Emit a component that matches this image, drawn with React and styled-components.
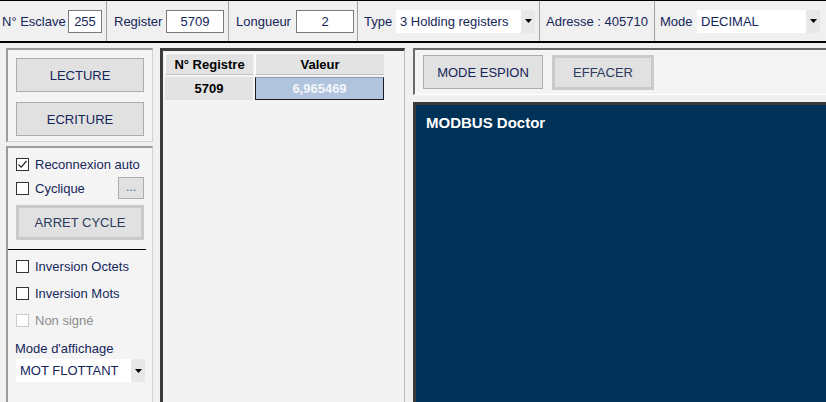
import React from "react";
import styled, { createGlobalStyle } from "styled-components";

const GlobalStyle = createGlobalStyle`
  html, body {
    margin: 0;
    padding: 0;
    background: #f0f0f0;
    font-family: "Liberation Sans", Arial, sans-serif;
  }
`;

function Checkbox({ checked, disabled, label }) {
  return (
    <CheckRow disabled={disabled}>
      <Box disabled={disabled}>
        {checked && (
          <svg width="11" height="11" viewBox="0 0 11 11">
            <path d="M1.5 5.5 L4.2 8.2 L9.5 2" fill="none" stroke="#222" strokeWidth="1.2" />
          </svg>
        )}
      </Box>
      <span>{label}</span>
    </CheckRow>
  );
}

function Select({ value, width }) {
  return (
    <SelectBox width={width}>
      <span>{value}</span>
      <Arrow>
        <svg width="7" height="4" viewBox="0 0 7 4">
          <path d="M0 0 H7 L3.5 4 Z" fill="#000" />
        </svg>
      </Arrow>
    </SelectBox>
  );
}

function App() {
  return (
    <Page>
      <GlobalStyle />
      <TopBar>
        <Field width={107} pl={2} pr={4}>
          <Label>N° Esclave</Label>
          <Input width={34}>255</Input>
        </Field>
        <Field width={122} pl={7} pr={4}>
          <Label>Register</Label>
          <Input width={58}>5709</Input>
        </Field>
        <Field width={129} pl={7} pr={3}>
          <Label>Longueur</Label>
          <Input width={58}>2</Input>
        </Field>
        <Field width={182} pl={6} pr={4}>
          <Label>Type</Label>
          <Select value="3 Holding registers" width={139} />
        </Field>
        <Field width={115} pl={6} pr={4}>
          <Label>Adresse : 405710</Label>
        </Field>
        <Field width={171} pl={5} pr={6} last>
          <Label>Mode</Label>
          <Select value="DECIMAL" width={123} />
        </Field>
      </TopBar>

      <Main>
        <LeftColumn>
          <Group>
            <Button>LECTURE</Button>
            <Button>ECRITURE</Button>
          </Group>
          <Group grow>
            <Options>
              <Checkbox checked label="Reconnexion auto" />
              <CycleRow>
                <Checkbox label="Cyclique" />
                <SmallButton>...</SmallButton>
              </CycleRow>
              <Button thick>ARRET CYCLE</Button>
            </Options>
            <Rule />
            <Options tight>
              <Checkbox label="Inversion Octets" />
              <Checkbox label="Inversion Mots" />
              <Checkbox disabled label="Non signé" />
            </Options>
            <DisplayLabel>Mode d'affichage</DisplayLabel>
            <Select value="MOT FLOTTANT" width={129} />
          </Group>
        </LeftColumn>

        <GridPanel>
          <Table>
            <HeadCell>N° Registre</HeadCell>
            <HeadCell>Valeur</HeadCell>
            <Cell>5709</Cell>
            <Cell selected>6,965469</Cell>
          </Table>
        </GridPanel>

        <RightColumn>
          <Toolbar>
            <Button wide={120}>MODE ESPION</Button>
            <Button wide={102} thick>EFFACER</Button>
          </Toolbar>
          <Console>
            <ConsoleTitle>MODBUS Doctor</ConsoleTitle>
          </Console>
        </RightColumn>
      </Main>
    </Page>
  );
}

export default App;

const Page = styled.div`
  width: 826px;
  height: 402px;
  display: flex;
  flex-direction: column;
  overflow: hidden;
  color: #14265a;
`;

const TopBar = styled.div`
  height: 40px;
  display: flex;
  border-top: 1px solid #000;
  border-bottom: 2px solid #000;
  box-sizing: content-box;
  font-size: 13px;
`;

const Field = styled.div`
  width: ${(p) => p.width}px;
  box-sizing: border-box;
  padding: 0 ${(p) => p.pr}px 0 ${(p) => p.pl}px;
  display: flex;
  align-items: center;
  justify-content: space-between;
  border-right: ${(p) => (p.last ? "none" : "1px solid #a0a0a0")};
`;

const Label = styled.span`
  white-space: nowrap;
`;

const Input = styled.div`
  width: ${(p) => p.width}px;
  height: 23px;
  box-sizing: border-box;
  border: 1px solid #7a7a7a;
  background: #fff;
  display: flex;
  align-items: center;
  justify-content: center;
`;

const SelectBox = styled.div`
  width: ${(p) => p.width}px;
  height: 23px;
  box-sizing: border-box;
  background: #fff;
  display: flex;
  align-items: center;
  justify-content: space-between;
  padding-left: 4px;
  font-size: 13px;
  white-space: nowrap;
`;

const Arrow = styled.div`
  width: 10px;
  height: 100%;
  background: #e8e8e8;
  display: flex;
  align-items: center;
  justify-content: center;
  padding: 0 2px;
`;

const Main = styled.div`
  flex: 1;
  display: flex;
  padding-top: 5px;
  min-height: 0;
`;

const LeftColumn = styled.div`
  width: 153px;
  padding-left: 6px;
  display: flex;
  flex-direction: column;
  gap: 4px;
  box-sizing: border-box;
  margin-right: 7px;
`;

const Group = styled.div`
  box-sizing: border-box;
  border-top: 2px solid #9c9c9c;
  border-left: 2px solid #9c9c9c;
  border-right: 1px solid #d2d2d2;
  border-bottom: ${(p) => (p.grow ? "none" : "1px solid #d2d2d2")};
  background: #f4f4f4;
  display: flex;
  flex-direction: column;
  ${(p) =>
    p.grow
      ? `flex: 1; padding: 9px 8px 0 8px;`
      : `height: 94px; padding: 8px 8px 0 8px; gap: 10px;`}
`;

const Button = styled.div`
  width: ${(p) => (p.wide ? `${p.wide}px` : "128px")};
  height: ${(p) => (p.thick ? "35px" : "34px")};
  box-sizing: border-box;
  background: #e1e1e1;
  border: ${(p) => (p.thick ? "3px solid #cacaca" : "1px solid #adadad")};
  color: ${(p) => (p.thick ? "#2c3b5e" : "#14265a")};
  font-size: 13px;
  display: flex;
  align-items: center;
  justify-content: center;
`;

const Options = styled.div`
  display: flex;
  flex-direction: column;
  gap: ${(p) => (p.tight ? "13px" : "10px")};
  font-size: 13px;
  ${(p) => (p.tight ? "margin-top: 9px;" : "")}
`;

const CheckRow = styled.div`
  display: flex;
  align-items: center;
  gap: 6px;
  height: 14px;
  white-space: nowrap;
  color: ${(p) => (p.disabled ? "#8d8d8d" : "#14265a")};
`;

const Box = styled.div`
  width: 13px;
  height: 13px;
  box-sizing: border-box;
  border: 1px solid ${(p) => (p.disabled ? "#cccccc" : "#333")};
  background: #fff;
  display: flex;
  align-items: center;
  justify-content: center;
`;

const CycleRow = styled.div`
  display: flex;
  align-items: center;
  justify-content: space-between;
  margin-top: -4px;
  margin-bottom: -4px;
`;

const SmallButton = styled.div`
  width: 26px;
  height: 22px;
  box-sizing: border-box;
  background: #e1e1e1;
  border: 1px solid #adadad;
  color: #3062a8;
  font-size: 12px;
  display: flex;
  align-items: flex-end;
  justify-content: center;
  padding-bottom: 4px;
`;

const Rule = styled.div`
  height: 1px;
  background: #000;
  margin: 9px -2px 0 -8px;
`;

const DisplayLabel = styled.div`
  font-size: 13px;
  line-height: 15px;
  margin: 14px 0 3px -1px;
`;

const GridPanel = styled.div`
  width: 245px;
  box-sizing: border-box;
  border-top: 3px solid #3c3c3c;
  border-left: 3px solid #3c3c3c;
  border-right: 1px solid #bdbdbd;
  background: #f3f3f3;
  padding: 2px;
`;

const Table = styled.div`
  display: grid;
  grid-template-columns: 88px 129px;
  column-gap: 2px;
  row-gap: 2px;
`;

const HeadCell = styled.div`
  height: 22px;
  background: #e3e3e3;
  border-top: 1px solid #fff;
  border-left: 1px solid #fff;
  border-bottom: 1px solid #c4c4c4;
  box-sizing: border-box;
  color: #000;
  font-weight: bold;
  font-size: 13px;
  display: flex;
  align-items: center;
  justify-content: center;
`;

const Cell = styled.div`
  height: 23px;
  box-sizing: border-box;
  background: ${(p) => (p.selected ? "#b0c4de" : "#e3e3e3")};
  border: ${(p) => (p.selected ? "1px solid #1a1a1a" : "none")};
  border-top: ${(p) => (p.selected ? "1px solid #8a9ab0" : "none")};
  color: ${(p) => (p.selected ? "#f4f6fa" : "#000")};
  font-weight: bold;
  font-size: 13px;
  display: flex;
  align-items: center;
  justify-content: center;
`;

const RightColumn = styled.div`
  flex: 1;
  display: flex;
  flex-direction: column;
  margin-left: 8px;
  gap: 7px;
`;

const Toolbar = styled.div`
  height: 47px;
  box-sizing: border-box;
  border-top: 2px solid #6a6a6a;
  border-left: 2px solid #6a6a6a;
  border-bottom: 1px solid #fff;
  background: #f4f4f4;
  display: flex;
  align-items: flex-start;
  gap: 9px;
  padding: 5px 0 0 8px;
`;

const Console = styled.div`
  flex: 1;
  background: #003157;
  border-top: 3px solid #3a3a3a;
  border-left: 3px solid #3a3a3a;
  padding: 9px 10px;
`;

const ConsoleTitle = styled.div`
  color: #fff;
  font-weight: bold;
  font-size: 15px;
`;
